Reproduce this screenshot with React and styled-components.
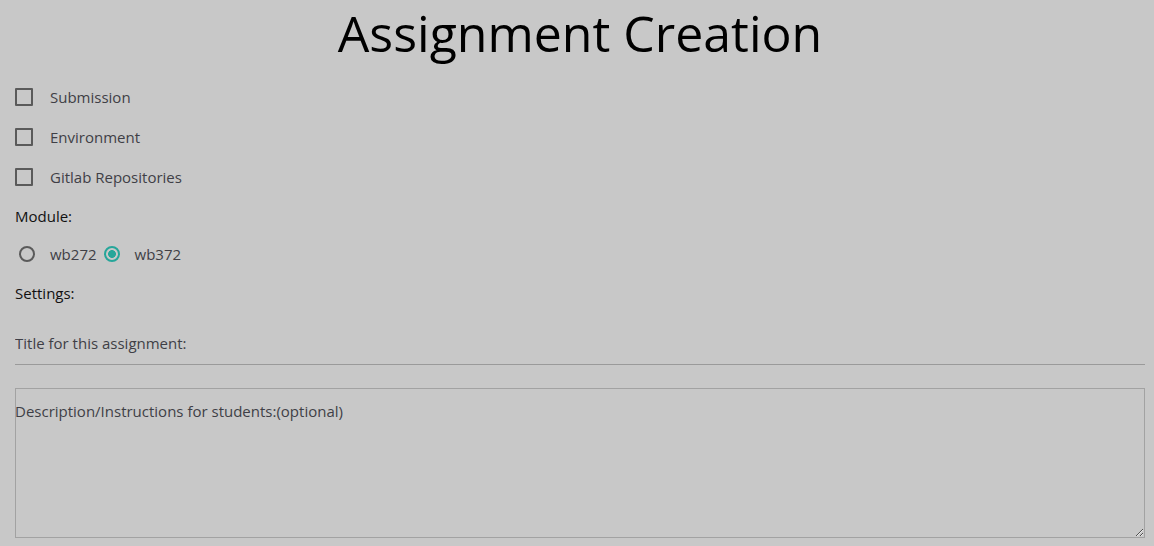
import React, { useState } from 'react';
import styled, { createGlobalStyle } from 'styled-components';

const GlobalStyle = createGlobalStyle`
  html, body {
    margin: 0;
    padding: 0;
    background: #c8c8c8;
    font-family: "Open Sans", "Liberation Sans", sans-serif;
  }
`;

const Page = styled.div`
  padding: 0 9px 0 15px;
  display: flex;
  flex-direction: column;
`;

const Heading = styled.h1`
  margin: 0 0 11px;
  font-size: 50px;
  font-weight: 400;
  line-height: 66px;
  text-align: center;
  color: #000;
`;

const CheckRow = styled.label`
  height: 40px;
  display: flex;
  align-items: center;
  gap: 17px;
  font-size: 15px;
  color: #3f3f46;
  cursor: pointer;
`;

const CheckBox = styled.input.attrs({ type: 'checkbox' })`
  appearance: none;
  margin: 0;
  width: 18px;
  height: 18px;
  box-sizing: border-box;
  border: 2px solid #5a5a5a;
  border-radius: 1px;
  background: transparent;
  cursor: pointer;

  &:checked {
    background: #26a69a;
    border-color: #26a69a;
  }
`;

const SectionLabel = styled.div`
  height: ${(p) => p.$h}px;
  display: flex;
  align-items: center;
  font-size: 15px;
  color: #111;
`;

const RadioGroup = styled.div`
  height: 38px;
  display: flex;
  align-items: center;
`;

const RadioOption = styled.label`
  display: flex;
  align-items: center;
  gap: 15px;
  margin-left: ${(p) => p.$offset}px;
  font-size: 15px;
  color: #3f3f46;
  cursor: pointer;
`;

const Radio = styled.input.attrs({ type: 'radio' })`
  appearance: none;
  margin: 0;
  width: 16px;
  height: 16px;
  box-sizing: border-box;
  border: 2px solid #5a5a5a;
  border-radius: 50%;
  background: transparent;
  cursor: pointer;

  &:checked {
    border-color: #26a69a;
    background: radial-gradient(circle, #26a69a 0 3.6px, transparent 4.2px);
  }
`;

const TitleInput = styled.input`
  margin-top: 9px;
  height: 42px;
  padding: 0;
  border: none;
  border-bottom: 1px solid #9a9a9a;
  background: transparent;
  font-family: inherit;
  font-size: 15px;
  color: #333;
  outline: none;

  &::placeholder {
    color: #3f3f46;
  }
`;

const DescArea = styled.textarea`
  margin-top: 23px;
  height: 150px;
  box-sizing: border-box;
  padding: 12px 0 0;
  text-indent: -1px;
  border: 1px solid #a2a2a2;
  background: transparent;
  font-family: inherit;
  font-size: 15px;
  line-height: 20px;
  color: #333;
  outline: none;
  resize: vertical;

  &::placeholder {
    color: #3f3f46;
  }
`;

const options = ['Submission', 'Environment', 'Gitlab Repositories'];

export default function App() {
  const [module, setModule] = useState('wb372');

  return (
    <>
      <GlobalStyle />
      <Page>
        <Heading>Assignment Creation</Heading>
        {options.map((o) => (
          <CheckRow key={o}>
            <CheckBox />
            {o}
          </CheckRow>
        ))}
        <SectionLabel $h={38}>Module:</SectionLabel>
        <RadioGroup>
          {['wb272', 'wb372'].map((m, i) => (
            <RadioOption key={m} $offset={i === 0 ? 4 : 7}>
              <Radio
                name="module"
                checked={module === m}
                onChange={() => setModule(m)}
              />
              {m}
            </RadioOption>
          ))}
        </RadioGroup>
        <SectionLabel $h={40}>Settings:</SectionLabel>
        <TitleInput placeholder="Title for this assignment:" />
        <DescArea placeholder="Description/Instructions for students:(optional)" />
      </Page>
    </>
  );
}
